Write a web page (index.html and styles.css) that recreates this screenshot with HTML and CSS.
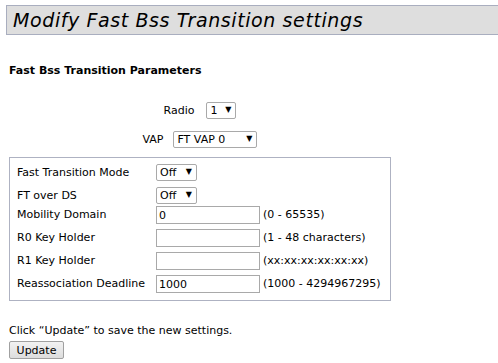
FILE: index.html
```html
<!DOCTYPE html>
<html>

<head>
    <title>Modify Fast Bss Transition settings</title>
    <link rel="stylesheet" href="styles.css">
</head>

<body>
    <h1 class="page-title">Modify Fast Bss Transition settings</h1>

    <div class="content">
        <h2 class="section-title">Fast Bss Transition Parameters</h2>

        <div class="center-row radio-row">
            <label>Radio</label>
            <span class="pick w-radio"><select><option>1</option></select></span>
        </div>
        <div class="center-row vap-row">
            <label>VAP</label>
            <span class="pick w-vap"><select><option>FT VAP 0</option></select></span>
        </div>

        <div class="param-box">
            <div class="param-grid">
                <label>Fast Transition Mode</label>
                <span class="pick w-off"><select><option>Off</option></select></span>
                <span></span>

                <label>FT over DS</label>
                <span class="pick w-off"><select><option>Off</option></select></span>
                <span></span>

                <label>Mobility Domain</label>
                <input type="text" value="0">
                <span class="hint">(0 - 65535)</span>

                <label>R0 Key Holder</label>
                <input type="text" value="">
                <span class="hint">(1 - 48 characters)</span>

                <label>R1 Key Holder</label>
                <input type="text" value="">
                <span class="hint">(xx:xx:xx:xx:xx:xx)</span>

                <label>Reassociation Deadline</label>
                <input type="text" value="1000">
                <span class="hint">(1000 - 4294967295)</span>
            </div>
        </div>

        <p class="note">Click “Update” to save the new settings.</p>
        <button class="update-btn">Update</button>
    </div>
</body>

</html>
```

FILE: styles.css
```css
html {
    overflow: hidden;
}

body {
    margin: 0;
    padding: 5px 0 0 6px;
    font-family: "DejaVu Sans", Verdana, sans-serif;
    font-size: 11px;
    color: #000;
    background-color: #fff;
}

.page-title {
    width: 492px;
    height: 30px;
    margin: 0;
    padding: 0 0 0 6px;
    box-sizing: border-box;
    line-height: 28px;
    background-color: #dedede;
    border: 1px solid #a9aebf;
    border-right: none;
    font-size: 19px;
    font-style: italic;
    font-weight: normal;
    letter-spacing: 0.6px;
    white-space: nowrap;
}

.content {
    padding-left: 3px;
}

.section-title {
    margin: 29px 0 0 0;
    font-size: 11px;
    font-weight: bold;
    line-height: 14px;
}

.center-row {
    width: 382px;
    display: flex;
    justify-content: center;
    align-items: center;
    gap: 12px;
}

.radio-row {
    margin-top: 24px;
}

.vap-row {
    margin-top: 12px;
    gap: 10px;
}

.pick {
    position: relative;
    display: inline-block;
    height: 17px;
}

.pick select {
    appearance: none;
    -webkit-appearance: none;
    width: 100%;
    height: 17px;
    margin: 0;
    padding: 0 0 0 3px;
    border: 1px solid #a9a9a9;
    border-radius: 2px;
    background-color: #fff;
    font-family: inherit;
    font-size: 11px;
    color: #000;
}

.pick::after {
    content: "▼";
    position: absolute;
    right: 5px;
    top: 3px;
    font-size: 8px;
    line-height: 10px;
    pointer-events: none;
}

.w-radio {
    width: 30px;
}

.w-vap {
    width: 84px;
}

.w-off {
    width: 41px;
}

.param-box {
    width: 382px;
    height: 144px;
    margin-top: 9px;
    box-sizing: border-box;
    border: 1px solid #aeb2c2;
    padding: 6px 0 0 7px;
}

.param-grid {
    display: grid;
    grid-template-columns: 136px 104px auto;
    grid-template-rows: 23px 19px 23px 23px 23px 18px;
    column-gap: 3px;
    align-items: start;
}

.param-grid label {
    line-height: 18px;
}

.param-grid input {
    width: 104px;
    height: 18px;
    box-sizing: border-box;
    margin: 0;
    padding: 0 2px;
    border: 1px solid #a9a9a9;
    font-family: inherit;
    font-size: 11px;
    color: #000;
}

.hint {
    line-height: 18px;
}

.note {
    margin: 22px 0 0 0;
    line-height: 15px;
}

.update-btn {
    margin-top: 3px;
    width: 55px;
    height: 18px;
    padding: 0;
    font-family: inherit;
    font-size: 11px;
    color: #000;
    background: linear-gradient(#f2f2f2, #dddddd);
    border: 1px solid #a0a0a0;
    border-radius: 2px;
}
```
